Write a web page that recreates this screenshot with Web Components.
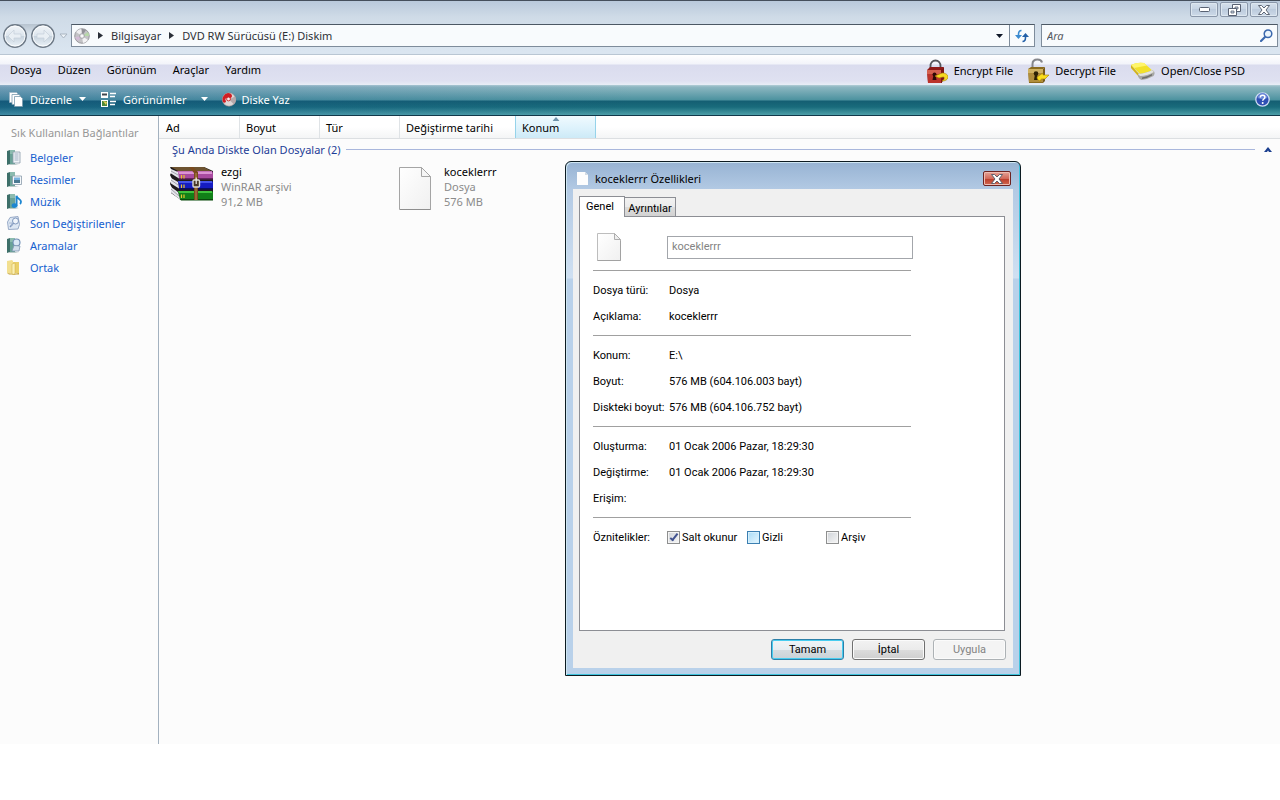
<!DOCTYPE html>
<html lang="tr">
<head>
<meta charset="utf-8">
<title>DVD RW Sürücüsü (E:) Diskim</title>
<style>
body { margin: 0; background: #fff; font: 11px/15px "Noto Sans", "Open Sans", sans-serif; color: #000; }
</style>
</head>
<body>
<desktop-view></desktop-view>

<script>
const RESET = `
  *, *::before, *::after { box-sizing: border-box; }
  button { font: inherit; color: inherit; background: none; border: 0; padding: 0; margin: 0; }
  input { font: inherit; color: inherit; margin: 0; border-radius: 0; }
  a { color: inherit; text-decoration: none; }
`;

function define(name, template) {
  customElements.define(name, class extends HTMLElement {
    connectedCallback() {
      if (this.shadowRoot) return;
      const root = this.attachShadow({ mode: 'open' });
      const markup = typeof template === 'function' ? template(this) : template;
      root.innerHTML = markup.replace('<style>', '<style>' + RESET);
    }
  });
}

const book = `<path d="M0 1l3-1v14l-3 1z" fill="#3d6f69"/><path d="M3 0h5v14H3z" fill="#6aa398"/><path d="M3 0h5v4H3z" fill="#8bbbaf"/><path d="M3 14h5l4 1H1z" fill="#b9c9c8"/>`;
const ICONS = {
  back: [24, 24, `<defs><linearGradient id="g" x2="0" y2="1"><stop stop-color="#f3f6f9"/><stop offset=".48" stop-color="#dde6ee"/><stop offset=".5" stop-color="#c6d2dd"/><stop offset="1" stop-color="#edf4f9"/></linearGradient></defs><circle cx="12" cy="12" r="11.2" fill="url(#g)" stroke="#6e7a87" stroke-width="1.4"/><circle cx="12" cy="12" r="10" fill="none" stroke="#fff" stroke-opacity=".8"/><path d="M5 12l6-6v4h7v4h-7v4z" fill="#e9eff4" stroke="#c6d0da" stroke-width=".7"/>`],
  fwd: [24, 24, `<defs><linearGradient id="g" x2="0" y2="1"><stop stop-color="#f3f6f9"/><stop offset=".48" stop-color="#dde6ee"/><stop offset=".5" stop-color="#c6d2dd"/><stop offset="1" stop-color="#edf4f9"/></linearGradient></defs><circle cx="12" cy="12" r="11.2" fill="url(#g)" stroke="#6e7a87" stroke-width="1.4"/><circle cx="12" cy="12" r="10" fill="none" stroke="#fff" stroke-opacity=".8"/><path d="M19 12l-6-6v4H6v4h7v4z" fill="#e9eff4" stroke="#c6d0da" stroke-width=".7"/>`],
  hollow: [9, 6, `<path d="M1 1h7L4.500 5z" fill="#eef4f9" stroke="#a9b4c0"/>`],
  disc: [16, 16, `<circle cx="8" cy="8" r="7.300" fill="#c3c3c6" stroke="#8b8b90" stroke-width=".8"/><path d="M8 8L2 4A7 7 0 0 1 7 1z" fill="#eeeef0"/><path d="M8 8l6 4a7 7 0 0 1-5 3z" fill="#f3f3f5"/><path d="M8 8l6-4a7 7 0 0 1 1 4z" fill="#b7d7a9"/><path d="M8 8l-7 1a7 7 0 0 0 3 4z" fill="#d3bcd6"/><path d="M8 8l0-7a7 7 0 0 1 4 1z" fill="#929298"/><circle cx="8" cy="8" r="2.400" fill="#e8e8ea" stroke="#88888d" stroke-width=".6"/><circle cx="8" cy="8" r=".9" fill="#fff"/>`],
  right: [5, 7, `<path d="M0 0l5 3.500L0 7z" fill="#2a2f38"/>`],
  down: [7, 4, `<path d="M0 0h7L3.500 4z" fill="currentColor"/>`],
  refresh: [14, 14, `<path d="M3.500 7V5.500C3.500 3 4.500 1.500 6.500 1.500" fill="none" stroke="#3b8bd0" stroke-width="1.600"/><path d="M0 6h7l-3.500 4z" fill="#3b8bd0"/><path d="M10.500 7v1.500c0 2.500-1 4-3 4" fill="none" stroke="#2360a8" stroke-width="1.600"/><path d="M7 8h7l-3.500-4z" fill="#2360a8"/>`],
  lens: [13, 13, `<path d="M5.500 7.500L1 12" stroke="#3b68ad" stroke-width="2.200" stroke-linecap="round"/><circle cx="8" cy="4.800" r="3.800" fill="#eaf4fc" stroke="#3b68ad" stroke-width="1.500"/>`],
  min: [11, 5, `<rect x=".5" y=".5" width="10" height="4" rx="1" fill="#fff" stroke="#596273"/>`],
  restore: [13, 12, `<path d="M4.500.5h8v7h-8z" fill="#fff" stroke="#596273"/><path d="M7 3h3v2H7z" fill="#ccd8e4" stroke="#596273" stroke-width=".8"/><path d="M.5 4.500h8v7h-8z" fill="#fff" stroke="#596273"/><path d="M3 7h3v2H3z" fill="#ccd8e4" stroke="#596273" stroke-width=".8"/>`],
  close: [12, 10, `<path d="M.5.5h3L6 3 8.500.5h3L8 5l3.500 4.500h-3L6 7 3.500 9.500h-3L4 5z" fill="#fff" stroke="#4f5867" stroke-width=".9"/>`],
  redlock: [22, 24, `<path d="M4.500 11V7c0-3 2-5.500 5-5.500S14.500 4 14.500 7v4" fill="none" stroke="#55565c" stroke-width="1.800"/><path d="M1 11l3-3h14l-2 3v13H2z" fill="#8f1a18"/><path d="M1 11h14v13H2z" fill="#bb342c"/><path d="M1 11h14v4H1z" fill="#d4604f"/><path d="M15 11l3-3v13l-3 3z" fill="#7c1513"/><circle cx="8.500" cy="15.500" r="2" fill="#2d0705"/><path d="M7.500 16h2l1 5h-4z" fill="#2d0705"/><path d="M9 17l7-3c4 0 6 2 6 4s-2 4-6 4c2-1 4-4 1-4l-4 1z" fill="#f6d920" stroke="#a27808" stroke-width=".6"/>`],
  goldlock: [22, 25, `<path d="M5.500 11V6c0-3 2-4.500 5-4.500 2 0 4 1 4.500 3" fill="none" stroke="#85868b" stroke-width="2"/><path d="M1 11l3-2h14l-2 2v14H2z" fill="#8b6b1e"/><path d="M1 11h15v13H2z" fill="#b08d3c"/><path d="M1 11h15v4H1z" fill="#d0b263"/><path d="M16 11l2-2v14l-2 2z" fill="#77591a"/><circle cx="9" cy="15.500" r="2.300" fill="#2d2105"/><path d="M8 16h2l1 6H7z" fill="#2d2105"/><path d="M10 19l6-4v2l6 0-4 4h-3c-1 0-2 1-1 2-3 0-4-2-4-4z" fill="#f9dd1c" stroke="#a27808" stroke-width=".6"/>`],
  drive: [25, 18, `<path d="M1 3Q7 0 14 1l10 9-13 3z" fill="#f2e12a"/><path d="M1 3Q7 0 14 1l3 2.500L4 6z" fill="#fff56b"/><path d="M1 3l8 9v3L1 6z" fill="#d2b31b"/><path d="M8 12q9-1 14-4 3 1 2.500 4l-1 2q-5 3-12 4-4-2-3.500-6z" fill="#a7a7a3"/><path d="M8 12q9-1 14-4l2 2q-7 4-14 4z" fill="#e3e3df"/><path d="M12 15.500q6-1 10-3.500v1.500q-4 2.500-10 3.500z" fill="#6d6d6b"/>`],
  pages: [14, 15, `<path d="M.5.500h7l1 1v9h-8z" fill="#fff" stroke="#9db6c6" stroke-width=".7"/><path d="M3 2.500h7l1 1v9H3z" fill="#fff" stroke="#7a9aae" stroke-width=".8"/><path d="M5.500 4.500h6l2 2v8h-8z" fill="#fff" stroke="#7a9aae" stroke-width=".8"/>`],
  views: [16, 15, `<path d="M0 0h7v6H0z" fill="#fff"/><path d="M1 1.500h5v2H1z" fill="#40474f"/><path d="M0 8h7v7H0z" fill="#fff"/><path d="M1 9h5v5H1z" fill="#4f8a3a"/><path d="M2 9l3 4 1-3z" fill="#e8d15a"/><path d="M9 1.500h6M9 4.500h5M9 9.500h6M9 12.500h5" stroke="#fff" stroke-width="1.300"/>`],
  burn: [14, 15, `<circle cx="7" cy="7.500" r="6.700" fill="#dcd6d6" stroke="#9c8c8c" stroke-width=".6"/><path d="M7 7.500l6-3a7 7 0 0 1-1 8z" fill="#b5a8aa"/><path d="M6 1A6.700 6.700 0 0 0 1 10c1 1 3 1 3-1-1-1-1-3 1-3 2 1 5 0 5-2 0-2-2-3-4-3z" fill="#d01d22"/><circle cx="6.500" cy="7" r="1.900" fill="#f6eeee" stroke="#c22" stroke-width=".9"/>`],
  help: [15, 15, `<circle cx="7.500" cy="7.500" r="6.700" fill="#2f4fb4" stroke="#cfdcf2" stroke-width="1.300"/><path d="M2.500 6a5 5 0 0 1 10 0c-3 1.500-7 1.500-10 0z" fill="#6c89d8"/><path d="M5.300 5.500c0-3 4.600-2.800 4.600-.2 0 1.700-2.200 1.700-2.200 3.500" fill="none" stroke="#fff" stroke-width="1.500"/><circle cx="7.700" cy="11" r="1" fill="#fff"/>`],
  docs: [14, 15, book + `<path d="M6 2h7v11H6z" fill="#f0f4f8" stroke="#8b9cab" stroke-width=".8"/><path d="M7.500 4h4M7.500 6h4M7.500 8h4M7.500 10h4" stroke="#8aa0b5" stroke-width=".8"/>`],
  pics: [15, 15, book + `<path d="M5.500 4h9v8.500h-9z" fill="#f4f8fb" stroke="#8b9cab" stroke-width=".8"/><path d="M7 5.500h6v2.500H7z" fill="#7ab3df"/><path d="M7 8h6v3H7z" fill="#4b7a92"/>`],
  music: [15, 15, book + `<path d="M8 1h3v13H8z" fill="#d5e4ea"/><ellipse cx="7.500" cy="11.500" rx="2.800" ry="2.300" fill="#1c86d1"/><path d="M9.500 12V2c1 3 4.500 3 4.500 5.500 0 1-.5 2-1 2.500" fill="none" stroke="#1c86d1" stroke-width="1.800"/>`],
  recent: [13, 14, `<path d="M3 1.500L11 .5l1.500 8L11 13 1.500 13.500.5 6z" fill="#dde7f3" stroke="#8fa3c2" stroke-width=".9"/><circle cx="8.500" cy="5" r="3" fill="#f0f5fb" stroke="#7f97bd"/><path d="M6.500 7L3 11" stroke="#7f97bd" stroke-width="1.500"/><path d="M2 7h3v3" fill="none" stroke="#a9bad4"/>`],
  search: [14, 15, book + `<circle cx="9.500" cy="4.500" r="3.500" fill="#dbe9f6" stroke="#6d8db5" stroke-width="1.100"/><path d="M7 7.500L5 13h7l1-5z" fill="#d2dfec" stroke="#7d95b2" stroke-width=".8"/>`],
  folder: [13, 15, `<path d="M0 1l5-1 1 1v13l-6-1z" fill="#f2df8f"/><path d="M6 2h6v11H6z" fill="#ead06b"/><path d="M5 4l3-1v12l-3-1z" fill="#fbf0b5" stroke="#cfae45" stroke-width=".5"/><path d="M0 13l6 1 6-1v1.500H2z" fill="#c4a23b"/>`],
  sort: [7, 4, `<path d="M0 4h7L3.500 0z" fill="#6f93ab"/>`],
  collapse: [8, 5, `<path d="M0 5h8L4 0z" fill="#1b3f8f"/><path d="M3 5h2L4 3.500z" fill="#fff"/>`],
  page: [32, 43, `<defs><linearGradient id="p" x2="1" y2="1"><stop stop-color="#fff"/><stop offset="1" stop-color="#f0f0f0"/></linearGradient></defs><path d="M.5.5h22l9 9v33H.5z" fill="url(#p)" stroke="#a5a5a5"/><path d="M22.500.5v9h9z" fill="#f6f6f6" stroke="#a5a5a5"/><path d="M1 42.500h30.500" stroke="#8e8e8e"/>`],
  midpage: [24, 28, `<defs><linearGradient id="p" x2="1" y2="1"><stop stop-color="#fff"/><stop offset="1" stop-color="#f0f0f0"/></linearGradient></defs><path d="M.5.5h17l6 6v21H.5z" fill="url(#p)" stroke="#bdbdbd"/><path d="M17.500.5v6h6z" fill="#eee" stroke="#adadad"/><path d="M.5 27.500h23v-20" fill="none" stroke="#a2a2a2"/>`],
  smallpage: [11, 13, `<path d="M0 0h8l3 3v10H0z" fill="#fdfdfd"/><path d="M8 0v3h3z" fill="#d3dbe3"/>`],
  rar: [44, 36, `<path d="M0 1h34l9 4v29H11L1 27l1-5-2-4 2-5-2-4 2-4z" fill="#1e1a1c"/>
    <path d="M1 1h33l7 4H8z" fill="#6d5330"/>
    <path d="M7 5h35l1 2v6H9z" fill="#a94aa0"/><path d="M8 5.500h34v2.500H9z" fill="#dc92d4"/><path d="M9 12h34v1.500H9z" fill="#65235f"/>
    <path d="M8 15h34l1 1v7H9z" fill="#151cc0"/><path d="M8 15h34v2H9z" fill="#4553ea"/><path d="M9 22h34v1.500H9z" fill="#0a0d63"/>
    <path d="M8 25h34l1 1v8H10z" fill="#118018"/><path d="M8 25h34v2H9z" fill="#3fc43c"/><path d="M10 33h33v1.500H11z" fill="#084a0b"/>
    <path d="M1 3l7 3 1 6.500-8-5zM1 12l7 4 1 6.500-8-5zM1 21l7 5 2 7.500-9-7z" fill="#e4e4ea"/><path d="M1 5l7 4M1 14l7 5M1 23l8 7" stroke="#9a9aa3" stroke-width=".9"/>
    <path d="M11.500 9v3.500M14 9v3.500M11.500 18.500V22M14 18.500V22M11.500 28.500V32M14 28.500V32" stroke="#e7c62c" stroke-width="1.200"/>
    <path d="M19 1h4l5 5v28h-4V7z" fill="#7a4a1e"/><path d="M26 7v27" stroke="#b5884c"/><rect x="23" y="14" width="6.500" height="7" rx="1" fill="#4a3a28" stroke="#dcdcd4" stroke-width="1.400"/><path d="M26.200 11.500v6.500" stroke="#eee" stroke-width="1.200"/>`]
};

define('app-icon', el => {
  const [w, h, body] = ICONS[el.getAttribute('name')];
  return `<style>:host { display: block; flex: none; } svg { display: block; }</style>
    <svg width="${w}" height="${h}" viewBox="0 0 ${w} ${h}" aria-hidden="true">${body}</svg>`;
});

define('caption-bar', `<style>
  :host { display: flex; justify-content: flex-end; gap: 2px; padding: 1px 2px 0; height: 20px; }
  button { display: grid; place-items: center; width: 28px; height: 15px; border: 1px solid #8a97aa; border-radius: 2px;
    background: linear-gradient(#d5e0ec, #c5d3e3 50%, #bccbdd 50%, #cddae8); box-shadow: inset 0 0 0 1px #dde7f0; }
</style>
<button aria-label="Simge durumuna küçült"><app-icon name="min"></app-icon></button>
<button aria-label="Önceki boyut"><app-icon name="restore"></app-icon></button>
<button aria-label="Kapat"><app-icon name="close"></app-icon></button>`);

define('address-bar', `<style>
  :host { display: flex; align-items: center; height: 33px; padding: 0 2px 4px 3px; }
  .nav { display: flex; align-items: center; gap: 4px; margin-right: 3px; }
  .pair { display: flex; gap: 4px; border-radius: 12px; background: linear-gradient(#b7c3cf, #d5e0ea 40%, transparent 50%); }
  .field { display: flex; align-items: stretch; height: 23px; border: 1px solid #7e8c9b; border-top-color: #4c5864; background: #f8fbfd; }
  .path { flex: 1; }
  .crumbs { flex: 1; display: flex; align-items: center; gap: 8px; padding-left: 2px; color: #2e3136; }
  .drop { padding: 0 6px; color: #101828; }
  .refresh { display: grid; place-items: center; width: 25px; border-left: 1px solid #7e8c9b; }
  .search { width: 237px; margin-left: 6px; align-items: center; padding: 0 4px 0 5px; }
  input { flex: 1; min-width: 0; border: 0; padding: 0; background: none; outline: 0; }
  input::placeholder { color: #55595f; font-style: italic; opacity: 1; }
</style>
<div class="nav">
  <div class="pair"><button aria-label="Geri"><app-icon name="back"></app-icon></button><button aria-label="İleri"><app-icon name="fwd"></app-icon></button></div>
  <button aria-label="Son sayfalar"><app-icon name="hollow"></app-icon></button>
</div>
<div class="field path">
  <div class="crumbs"><app-icon name="disc"></app-icon><app-icon name="right"></app-icon><a href="#">Bilgisayar</a><app-icon name="right"></app-icon><a href="#">DVD RW Sürücüsü (E:) Diskim</a></div>
  <button class="drop" aria-label="Önceki konumlar"><app-icon name="down"></app-icon></button>
  <button class="refresh" aria-label="Yenile"><app-icon name="refresh"></app-icon></button>
</div>
<div class="field search"><input type="text" placeholder="Ara" aria-label="Ara"><app-icon name="lens"></app-icon></div>`);

define('menu-bar', `<style>
  :host { display: flex; align-items: center; height: 31px; padding: 0 35px 2px 10px; border-top: 1px solid #b9c6d3;
    background: linear-gradient(#fff, #f2f4fa 9px, #dadcee 10px, #dfe1f1 26px, #e8eef6); }
  nav, .tools { display: flex; align-items: center; }
  nav { flex: 1; gap: 16px; }
  .tools { gap: 14px; padding-top: 3px; }
  .tools button { display: flex; align-items: center; gap: 6px; height: 26px; }
</style>
<nav><button>Dosya</button><button>Düzen</button><button>Görünüm</button><button>Araçlar</button><button>Yardım</button></nav>
<div class="tools">
  <button><app-icon name="redlock"></app-icon>Encrypt File</button>
  <button><app-icon name="goldlock"></app-icon>Decrypt File</button>
  <button><app-icon name="drive"></app-icon>Open/Close PSD</button>
</div>`);

define('command-bar', `<style>
  :host { display: flex; align-items: center; height: 31px; padding: 0 10px 2px 9px; color: #fff; border-bottom: 1px solid #12384a;
    background: linear-gradient(90deg, rgb(20 70 150 / 22%), transparent 50%),
      linear-gradient(#b3ced6, #8db7c1 2px, #4c929f 15px, #145e72 16px, #196b7b 22px, #4d9fa8 30px); }
  button { display: flex; align-items: center; }
  .organise { gap: 7px; margin-right: 15px; }
  .views { gap: 6px; margin-right: 14px; }
  .burn { gap: 6px; flex: 1; }
  .far { margin-left: 8px; }
</style>
<button class="organise"><app-icon name="pages"></app-icon>Düzenle<app-icon name="down"></app-icon></button>
<button class="views"><app-icon name="views"></app-icon>Görünümler<app-icon class="far" name="down"></app-icon></button>
<button class="burn"><app-icon name="burn"></app-icon>Diske Yaz</button>
<button aria-label="Yardım al"><app-icon name="help"></app-icon></button>`);

define('side-link', el => `<style>
  :host { display: block; }
  a { display: grid; grid-template-columns: 23px 1fr; align-items: center; height: 22px; color: #1560cf; }
</style><a href="#"><app-icon name="${el.getAttribute('icon')}"></app-icon><slot></slot></a>`);

define('side-panel', `<style>
  :host { display: block; width: 159px; flex: none; padding: 6px 0 0 7px; border-right: 1px solid #a3b1bf; }
  h2 { margin: 0; padding-left: 4px; font: inherit; line-height: 22px; color: #979797; height: 24px; }
</style>
<h2>Sık Kullanılan Bağlantılar</h2>
<nav><side-link icon="docs">Belgeler</side-link><side-link icon="pics">Resimler</side-link><side-link icon="music">Müzik</side-link><side-link icon="recent">Son Değiştirilenler</side-link><side-link icon="search">Aramalar</side-link><side-link icon="folder">Ortak</side-link></nav>`);

define('column-header', `<style>
  :host { display: block; position: relative; border-right: 1px solid #dfe3e6; }
  :host([sorted]) { background: linear-gradient(#f0fafe, #dff3fc 50%, #cdeaf7); border-right-color: #96d3ea; box-shadow: -1px 0 #96d3ea; }
  button { width: 100%; height: 22px; padding-left: 6px; text-align: left; white-space: nowrap; }
  app-icon { display: none; position: absolute; top: 1px; left: 50%; transform: translateX(-50%); }
  :host([sorted]) app-icon { display: block; }
</style><button><slot></slot></button><app-icon name="sort"></app-icon>`);

define('file-tile', el => `<style>
  :host { display: grid; grid-template-columns: 48px 1fr; gap: 5px; color: #8b8b8b; }
  .icon { display: grid; justify-items: center; align-content: start; padding-top: 2px; }
  .icon.page { padding-top: 3px; }
  ::slotted(b) { font-weight: 400; color: #000; }
  .text { display: flex; flex-direction: column; }
</style><div class="icon ${el.getAttribute('icon')}"><app-icon name="${el.getAttribute('icon')}"></app-icon></div><div class="text"><slot></slot></div>`);

define('file-list', `<style>
  :host { display: block; flex: 1; min-width: 0; }
  .head { display: grid; grid-template-columns: 81px 80px 80px 116px 80px 1fr; height: 23px; border-bottom: 1px solid #dcdfe2;
    background: linear-gradient(#fff 50%, #f4f5f6); }
  .head column-header:first-child { padding-left: 1px; }
  .group { display: flex; align-items: center; gap: 5px; height: 20px; padding: 0 8px 0 13px; color: #1d3c97; }
  .group hr { flex: 1; margin: 0; border: 0; border-top: 1px solid #a9b7dc; }
  .group button { margin-left: 4px; }
  .tiles { display: grid; grid-template-columns: repeat(auto-fill, 223px); padding: 5px 0 0 9px; }
</style>
<div class="head"><column-header>Ad</column-header><column-header>Boyut</column-header><column-header>Tür</column-header><column-header>Değiştirme tarihi</column-header><column-header sorted>Konum</column-header></div>
<div class="group"><span>Şu Anda Diskte Olan Dosyalar (2)</span><hr><button aria-label="Grubu daralt"><app-icon name="collapse"></app-icon></button></div>
<div class="tiles">
  <file-tile icon="rar"><b>ezgi</b><span>WinRAR arşivi</span><span>91,2 MB</span></file-tile>
  <file-tile icon="page"><b>koceklerrr</b><span>Dosya</span><span>576 MB</span></file-tile>
</div>`);

define('explorer-window', `<style>
  :host { display: flex; flex-direction: column; min-height: 93vh; background: #fcfcfc; }
  .glass { border-top: 1px solid #454f5c; background: linear-gradient(#b9c9db, #cfdbe7 16px, #dae5f0 50px); }
  .body { flex: 1; display: flex; }
</style>
<header class="glass"><caption-bar></caption-bar><address-bar></address-bar></header>
<menu-bar></menu-bar><command-bar></command-bar>
<div class="body"><side-panel></side-panel><file-list></file-list></div>`);

define('fact-group', `<style>
  :host { display: block; padding: 6px 0; border-bottom: 1px solid #a0a0a0; }
  :host([last]) { border: 0; }
</style><slot></slot>`);

define('fact-row', el => `<style>
  :host { display: grid; grid-template-columns: 76px 1fr; align-items: center; height: 26px; white-space: nowrap; }
</style><span>${el.getAttribute('label')}</span><slot></slot>`);

define('check-option', el => `<style>
  :host { display: block; }
  label { display: flex; align-items: center; gap: 2px; }
  input { appearance: none; display: grid; place-items: center; width: 13px; height: 13px; border: 1px solid #8e8f8f;
    background: linear-gradient(135deg, #cfd3d8, #f6f6f6); box-shadow: inset 0 0 0 1px #f4f4f4; }
  input:checked::after { content: ""; width: 4px; height: 9px; border: solid #41528f; border-width: 0 2px 2px 0; transform: rotate(38deg); margin-top: -2px; }
  :host([hot]) input { border-color: #3c7fb1; background: linear-gradient(135deg, #a9dcf7, #e6f6fe); box-shadow: inset 0 0 0 1px #d5f0fd; }
</style><label><input type="checkbox" ${el.hasAttribute('checked') ? 'checked' : ''}><slot></slot></label>`);

define('dialog-button', el => `<style>
  :host { display: block; width: 73px; }
  button { width: 100%; height: 21px; border: 1px solid #707070; border-radius: 3px; box-shadow: inset 0 0 0 1px #fbfbfb;
    background: linear-gradient(#f2f2f2, #ebebeb 50%, #dddddd 50%, #cfcfcf); }
  :host([primary]) button { border-color: #2c7fa8; box-shadow: inset 0 0 0 1px #48cdf0; background: linear-gradient(#f0f4f6, #e6edf1 50%, #d6dde1 50%, #cad2d7); }
  button:disabled { color: #838383; border-color: #adb2b5; background: #f4f4f4; }
</style><button ${el.hasAttribute('disabled') ? 'disabled' : ''}><slot></slot></button>`);

define('properties-dialog', `<style>
  :host { display: block; width: 456px; padding: 0 6px 6px; border: 1px solid #0c1b22; border-radius: 6px 6px 0 0;
    font: 11px/15px Roboto, "Noto Sans", sans-serif;
    background: linear-gradient(#97b3d3, #b3cae4 28px, #cfe0f2 116px, #b9d1ea 117px);
    box-shadow: inset 1px 1px #cfe6f2, inset -1px -1px #3fc3dc; }
  header { display: flex; align-items: center; gap: 7px; height: 27px; padding: 6px 3px 0 5px; font-family: "Noto Sans", sans-serif; }
  h1 { flex: 1; margin: 0; font: inherit; }
  .close { display: grid; place-items: center; width: 28px; height: 15px; border: 1px solid #6e2320; border-radius: 2px;
    background: linear-gradient(#e5a397, #d2695a 50%, #b93a28 50%, #d2684f); box-shadow: inset 0 0 0 1px #eebcb2; }
  .client { margin: 0 1px 1px; padding: 7px 7px 8px 6px; background: #f0f0f0; }
  .tabs { display: flex; align-items: flex-end; }
  .tabs button { position: relative; height: 19px; padding: 0; border: 1px solid #8c8e94; border-bottom: 0; background: linear-gradient(#f2f2f2, #ebebeb 50%, #dddddd 50%, #d2d2d2); }
  .tabs button[aria-selected="true"] { z-index: 1; height: 21px; width: 46px; margin: 0 -1px -1px 0; padding: 0 4px 2px 0; background: #fff; }
  .tabs button:last-child { width: 52px; padding-top: 2px; }
  .panel { width: 426px; min-height: 415px; padding: 0 13px; border: 1px solid #8c8e94; background: #fff; }
  .facts { width: 318px; }
  .name { display: grid; grid-template-columns: 74px 246px; align-items: start; height: 54px; padding: 16px 0 0; border-bottom: 1px solid #a0a0a0; }
  .name app-icon { padding-left: 4px; }
  .name input { height: 23px; margin-top: 3px; padding: 0 4px 2px; border: 1px solid #a3a6ab; background: #fff; color: #838383; }
  .checks { display: grid; grid-template-columns: 80px 79px 1fr; margin-left: -2px; }
  footer { display: flex; justify-content: flex-end; gap: 8px; padding-top: 8px; }
</style>
<header><app-icon name="smallpage"></app-icon><h1>koceklerrr Özellikleri</h1><button class="close" aria-label="Kapat"><app-icon name="close"></app-icon></button></header>
<div class="client">
  <div class="tabs" role="tablist"><button role="tab" aria-selected="true">Genel</button><button role="tab" aria-selected="false">Ayrıntılar</button></div>
  <div class="panel" role="tabpanel"><div class="facts">
    <div class="name"><app-icon name="midpage"></app-icon><input type="text" value="koceklerrr" aria-label="Dosya adı" readonly></div>
    <fact-group><fact-row label="Dosya türü:">Dosya</fact-row><fact-row label="Açıklama:">koceklerrr</fact-row></fact-group>
    <fact-group><fact-row label="Konum:">E:\\</fact-row><fact-row label="Boyut:">576 MB (604.106.003 bayt)</fact-row><fact-row label="Diskteki boyut:">576 MB (604.106.752 bayt)</fact-row></fact-group>
    <fact-group><fact-row label="Oluşturma:">01 Ocak 2006 Pazar, 18:29:30</fact-row><fact-row label="Değiştirme:">01 Ocak 2006 Pazar, 18:29:30</fact-row><fact-row label="Erişim:"></fact-row></fact-group>
    <fact-group last><fact-row label="Öznitelikler:"><div class="checks"><check-option checked>Salt okunur</check-option><check-option hot>Gizli</check-option><check-option>Arşiv</check-option></div></fact-row></fact-group>
  </div></div>
  <footer><dialog-button primary>Tamam</dialog-button><dialog-button>İptal</dialog-button><dialog-button disabled>Uygula</dialog-button></footer>
</div>`);

define('desktop-view', `<style>
  :host { display: block; position: relative; min-height: 100vh; }
  properties-dialog { position: absolute; left: 565px; top: 161px; }
</style>
<explorer-window></explorer-window>
<properties-dialog role="dialog"></properties-dialog>`);
</script>
</body>
</html>
